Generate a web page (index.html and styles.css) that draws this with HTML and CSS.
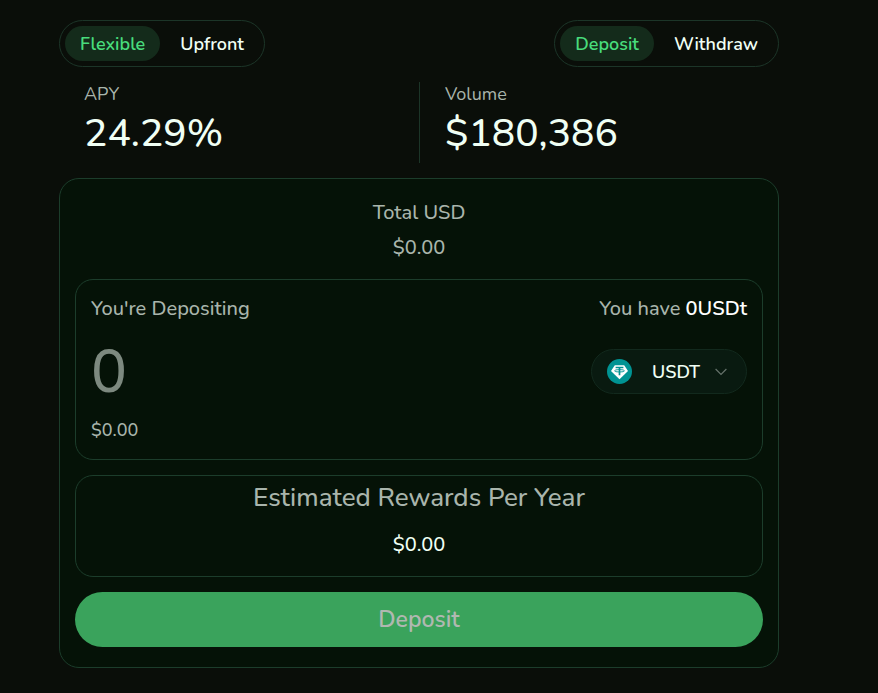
FILE: index.html
```html
<!DOCTYPE html>
<html lang="en">
<head>
    <meta charset="UTF-8">
    <meta name="viewport" content="width=device-width, initial-scale=1.0">
    <title>Deposit</title>
    <link rel="stylesheet" href="styles.css">
</head>
<body>
    <main class="vault">
        <div class="toolbar">
            <div class="toggle">
                <button type="button" class="toggle-btn active">Flexible</button>
                <button type="button" class="toggle-btn">Upfront</button>
            </div>
            <div class="toggle">
                <button type="button" class="toggle-btn active">Deposit</button>
                <button type="button" class="toggle-btn">Withdraw</button>
            </div>
        </div>

        <div class="stats">
            <div class="stat">
                <div class="stat-label">APY</div>
                <div class="stat-value">24.29%</div>
            </div>
            <div class="stat">
                <div class="stat-label">Volume</div>
                <div class="stat-value">$180,386</div>
            </div>
        </div>

        <form class="panel">
            <div class="total">
                <div>Total USD</div>
                <div>$0.00</div>
            </div>

            <div class="box amount-box">
                <div class="row">
                    <label for="amount">You're Depositing</label>
                    <div>You have <span class="balance">0USDt</span></div>
                </div>
                <div class="row amount-row">
                    <input class="amount" id="amount" type="text" inputmode="decimal" placeholder="0">
                    <label class="token" for="token">
                        <svg class="token-icon" viewBox="0 0 25 25" aria-hidden="true">
                            <circle cx="12.5" cy="12.5" r="12.5" fill="#009393"/>
                            <path d="M7.8 6.2h9.4l3.8 5.7-8.5 8.3L4 11.9z" fill="#fff"/>
                            <path d="M8.6 8.5h7.8M12.5 8.5v7.8" stroke="#009393" stroke-width="1.7" fill="none"/>
                            <ellipse cx="12.5" cy="11.8" rx="4.9" ry="1.2" stroke="#009393" stroke-width="0.9" fill="none"/>
                        </svg>
                        <select class="token-select" id="token" aria-label="Token">
                            <option>USDT</option>
                        </select>
                        <svg class="chevron" viewBox="0 0 12 8" aria-hidden="true">
                            <path d="M0.6 1l5.4 5.4L11.4 1" fill="none" stroke="#66736b" stroke-width="1.2"/>
                        </svg>
                    </label>
                </div>
                <div class="amount-usd">$0.00</div>
            </div>

            <div class="box rewards">
                <div class="rewards-title">Estimated Rewards Per Year</div>
                <div class="rewards-value">$0.00</div>
            </div>

            <button type="submit" class="submit-btn" disabled>Deposit</button>
        </form>
    </main>
</body>
</html>
```
FILE: styles.css
```css
* {
    box-sizing: border-box;
}
body {
    margin: 0;
    background-color: #0a0e09;
    color: #a9b5ac;
    font-family: Nunito, Lato, sans-serif;
    font-size: 20px;
    font-weight: 500;
    line-height: 28px;
}
button, input, select {
    font: inherit;
    color: inherit;
}
.vault {
    padding: 20px 99px 25px 59px;
}
.toolbar {
    display: flex;
    justify-content: space-between;
}
.toggle {
    display: flex;
    gap: 5px;
    padding: 5px;
    border: 1px solid #1c3528;
    border-radius: 24px;
}
.toggle-btn {
    height: 35px;
    padding: 0 15px;
    border: none;
    border-radius: 18px;
    background: none;
    color: #f0fff4;
    font-size: 18px;
    font-weight: 600;
    cursor: pointer;
}
.toggle-btn.active {
    background-color: #142b1b;
    color: #48dc7c;
}

/* APY and volume */
.stats {
    display: grid;
    grid-template-columns: 1fr 1fr;
    margin: 15px 0;
}
.stat {
    height: 81px;
    padding: 0 25px;
}
.stat + .stat {
    border-left: 1px solid #1c3528;
}
.stat-label {
    font-size: 18px;
    font-weight: 400;
    line-height: 24px;
}
.stat-value {
    color: #f0fff4;
    font-size: 39px;
    line-height: 56px;
}

/* Deposit form */
.panel {
    padding: 20px 15px;
    border: 1px solid #1c3d2b;
    border-radius: 20px;
    background-color: #051207;
}
.total {
    display: grid;
    gap: 7px;
    margin-bottom: 17px;
    text-align: center;
}
.box {
    margin-bottom: 15px;
    border: 1px solid #1c3d2b;
    border-radius: 18px;
}
.amount-box {
    padding: 15px;
}
.row {
    display: flex;
    align-items: center;
    justify-content: space-between;
}
.balance {
    color: #fff;
    font-weight: 600;
}
.amount-row {
    padding: 26px 0 22px;
}
.amount {
    flex: 1;
    min-width: 0;
    height: 45px;
    padding: 0;
    border: none;
    outline: none;
    background: none;
    font-size: 60px;
    line-height: 45px;
}
.amount::placeholder {
    color: #7d897f;
    opacity: 1;
}
.token {
    display: flex;
    align-items: center;
    height: 45px;
    padding: 0 19px 0 15px;
    border: 1px solid #12291d;
    border-radius: 23px;
    background-color: #091a10;
}
.token-icon {
    width: 25px;
    height: 25px;
    margin-right: 20px;
}
.token-select {
    appearance: none;
    padding: 0;
    border: none;
    outline: none;
    background: none;
    color: #f0fff4;
    font-size: 18px;
    font-weight: 600;
}
.chevron {
    width: 12px;
    height: 8px;
    margin-left: 14px;
}
.amount-usd {
    font-size: 18px;
}
.rewards {
    padding: 4px 15px 17px;
    text-align: center;
}
.rewards-title {
    margin-bottom: 15px;
    font-size: 26px;
    line-height: 36px;
}
.rewards-value {
    color: #f0fff4;
}
.submit-btn {
    display: block;
    width: 100%;
    height: 55px;
    border: none;
    border-radius: 28px;
    background-color: #3aa35c;
    color: #b0b8b1;
    font-size: 23px;
    font-weight: 600;
}
```
